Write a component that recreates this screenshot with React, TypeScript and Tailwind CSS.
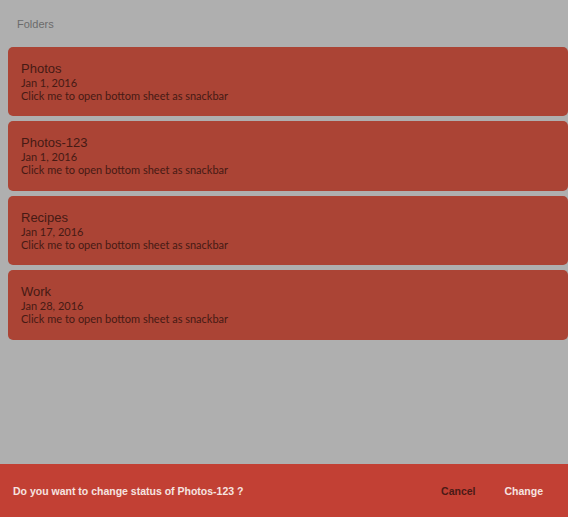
const folders = [
  { name: "Photos", date: "Jan 1, 2016" },
  { name: "Photos-123", date: "Jan 1, 2016" },
  { name: "Recipes", date: "Jan 17, 2016" },
  { name: "Work", date: "Jan 28, 2016" },
];

export default function App() {
  return (
    <div className="relative h-[517px] w-[568px] overflow-hidden bg-[#afafaf] font-['Lato',sans-serif]">
      <div className="pl-[17px] pt-[17px] pb-[15px] text-[11px] leading-[15px] text-[#6b6b6b] font-['Liberation_Sans',sans-serif]">
        Folders
      </div>

      <div className="flex flex-col gap-[5px] pl-[8px]">
        {folders.map((f) => (
          <div
            key={f.name}
            className="h-[69.4px] rounded-[5px] bg-[#ab4435] pl-[13px] pt-[14px] text-[#461a14] cursor-pointer"
          >
            <div className="text-[13px] leading-[15px] font-['Liberation_Sans',sans-serif]">
              {f.name}
            </div>
            <div className="text-[11px] leading-[13px]">{f.date}</div>
            <div className="text-[11px] leading-[13px]">
              Click me to open bottom sheet as snackbar
            </div>
          </div>
        ))}
      </div>

      <div className="absolute bottom-0 left-0 right-0 flex h-[53px] items-center bg-[#c24034] pl-[13px] pr-[25px] pt-[3px] font-['Liberation_Sans',sans-serif] text-[10.5px] font-bold">
        <span className="flex-1 text-[#f6e4e0]">
          Do you want to change status of Photos-123 ?
        </span>
        <button className="mr-[29px] text-[#4a1a16]">Cancel</button>
        <button className="text-[#f6e4e0]">Change</button>
      </div>
    </div>
  );
}
